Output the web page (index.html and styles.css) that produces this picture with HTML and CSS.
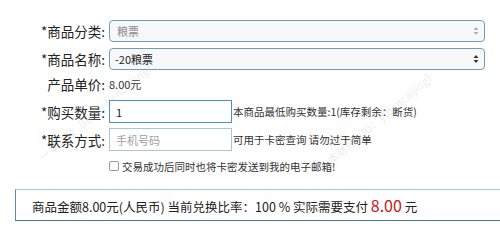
FILE: index.html
```html
<!DOCTYPE html>
<html lang="zh-CN">
<head>
    <meta charset="UTF-8">
    <meta name="viewport" content="width=device-width, initial-scale=1.0">
    <title>购买商品</title>
    <link rel="stylesheet" href="styles.css">
</head>
<body>
    <div class="page">
        <div class="form">
            <div class="row row-select">
                <label class="label">*商品分类:</label>
                <div class="select select-muted">
                    <span>粮票</span>
                    <svg class="arrows" width="6" height="10" viewBox="0 0 6 10"><path d="M3 1 L5.5 4 H0.5 Z M3 9 L5.5 6 H0.5 Z" fill="#b0b0b0"/></svg>
                </div>
            </div>
            <div class="row row-select">
                <label class="label">*商品名称:</label>
                <div class="select">
                    <span>-20粮票</span>
                    <svg class="arrows" width="6" height="10" viewBox="0 0 6 10"><path d="M3 1 L5.5 4 H0.5 Z M3 9 L5.5 6 H0.5 Z" fill="#333"/></svg>
                </div>
            </div>
            <div class="row row-price">
                <label class="label">产品单价:</label>
                <span class="price">8.00元</span>
            </div>
            <div class="row row-input">
                <label class="label">*购买数量:</label>
                <input class="field field-active" type="text" value="1">
                <span class="hint">本商品最低购买数量:1(库存剩余：断货)</span>
            </div>
            <div class="row row-input">
                <label class="label">*联系方式:</label>
                <input class="field" type="text" placeholder="手机号码">
                <span class="hint">可用于卡密查询 请勿过于简单</span>
            </div>
            <div class="row row-check">
                <span class="label"></span>
                <span class="check"></span>
                <span class="check-text">交易成功后同时也将卡密发送到我的电子邮箱!</span>
            </div>
        </div>

        <div class="total">商品金额8.00元(人民币) 当前兑换比率：100 % 实际需要支付 <span class="pay">8.00</span> 元</div>

        <div class="divider"></div>

        <div class="watermark">
            <span class="wm wm1">一本财经（ID：yibencaijing）</span>
            <span class="wm wm2">一本财经（ID：yibencaijing）</span>
        </div>
    </div>
</body>
</html>
```

FILE: styles.css
```css
body {
    margin: 0;
    padding: 0;
    background: #fff;
    font-family: "Noto Sans CJK SC", "Liberation Sans", sans-serif;
    color: #222;
    overflow: hidden;
}
.page {
    position: relative;
    width: 500px;
    height: 252px;
    overflow: hidden;
}
.form {
    padding-top: 20px;
}
.row {
    display: flex;
    align-items: center;
}
.label {
    width: 105px;
    flex: none;
    text-align: right;
    font-size: 13.5px;
    line-height: 16px;
    margin-right: 4px;
}
.row-select {
    height: 22px;
    margin-bottom: 6px;
}
.select {
    box-sizing: border-box;
    width: 376px;
    height: 22px;
    border: 1px solid #6e9db3;
    border-radius: 4px;
    background: #f6f8fa;
    display: flex;
    align-items: center;
    justify-content: space-between;
    padding: 0 5px;
    font-size: 11px;
    color: #222;
}
.select-muted {
    color: #8a8a8a;
    padding-left: 7px;
}
.row-price {
    height: 24px;
    margin-top: -4px;
    padding-bottom: 4px;
}
.price {
    font-size: 11px;
    color: #333;
}
.row-input {
    height: 23px;
    margin-bottom: 5px;
}
.field {
    box-sizing: border-box;
    width: 123px;
    height: 23px;
    margin: 0;
    border: 1px solid #a9c6d8;
    padding: 0 6px;
    font-family: inherit;
    font-size: 11px;
    color: #222;
    outline: none;
}
.field-active {
    border-color: #4f90c4;
}
.field::placeholder {
    color: #a0a0a0;
}
.hint {
    font-size: 10.5px;
    color: #333;
    margin-left: 1px;
    white-space: nowrap;
}
.row-check {
    height: 12px;
    margin-top: 9px;
}
.check {
    box-sizing: border-box;
    width: 10px;
    height: 10px;
    border: 1px solid #999;
    border-radius: 2px;
    margin-right: 3px;
}
.check-text {
    font-size: 10.5px;
    color: #333;
}
.total {
    box-sizing: border-box;
    margin: 17px 0 0 15px;
    width: 500px;
    height: 32px;
    border-top: 1px solid #a8c5d5;
    border-left: 1px solid #5f8ea4;
    border-bottom: 1px solid #4b7c93;
    padding-left: 16px;
    font-size: 12.5px;
    line-height: 30px;
    color: #222;
    white-space: nowrap;
}
.pay {
    color: #c8161d;
    font-size: 16px;
}
.divider {
    margin-top: 31px;
    border-top: 1px solid #a8c5d5;
}
.watermark {
    position: absolute;
    left: 0;
    top: 0;
    width: 500px;
    height: 252px;
    pointer-events: none;
}
.wm {
    position: absolute;
    font-size: 11px;
    color: rgba(150, 150, 150, 0.2);
    white-space: nowrap;
    transform: rotate(-40deg);
    transform-origin: left center;
}
.wm1 { left: 40px; top: 150px; }
.wm2 { left: 320px; top: 160px; }
```
